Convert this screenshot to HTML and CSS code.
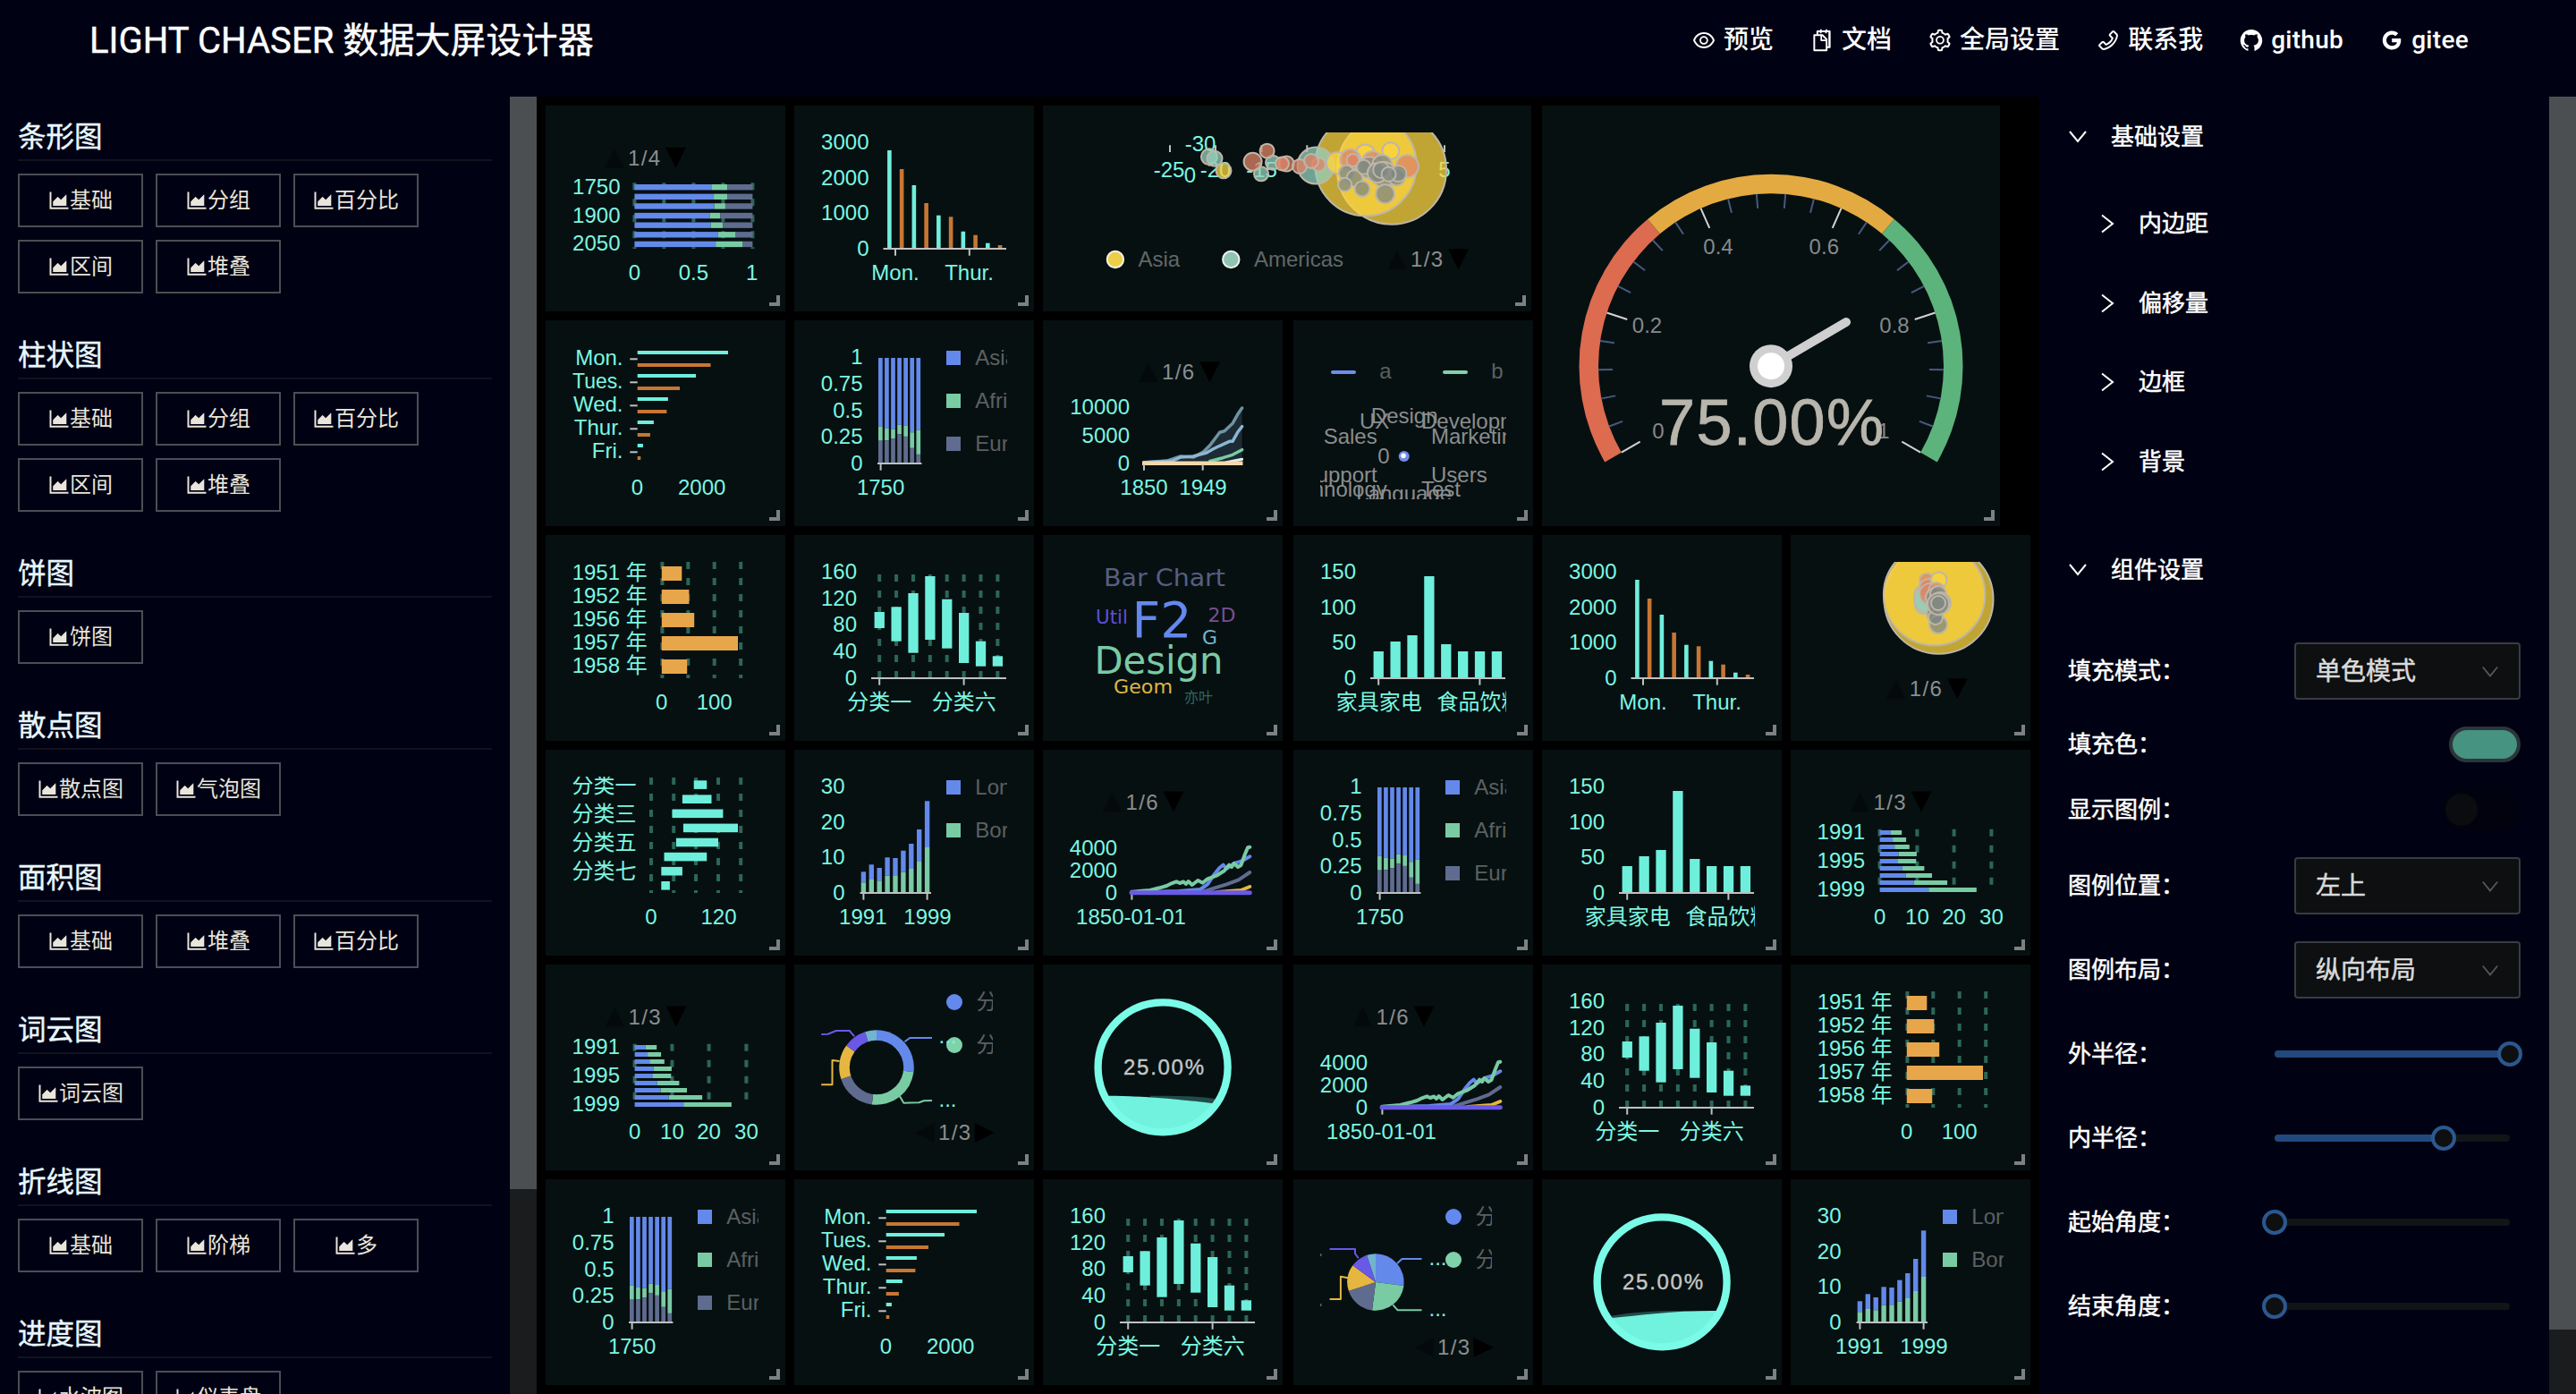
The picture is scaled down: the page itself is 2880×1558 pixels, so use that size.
FILE: index.html
```html
<!DOCTYPE html>
<html lang="zh-CN">
<head>
<meta charset="utf-8">
<title>LIGHT CHASER 数据大屏设计器</title>
<link rel="stylesheet" href="styles.css">
</head>
<body>
<svg class="defs" aria-hidden="true">
  <symbol id="i-area" viewBox="0 0 1024 1024"><path d="M888 792H200V168c0-4.400-3.600-8-8-8h-56c-4.400 0-8 3.600-8 8v688c0 4.400 3.600 8 8 8h752c4.400 0 8-3.600 8-8v-56c0-4.400-3.600-8-8-8zm-616-64h536c4.400 0 8-3.600 8-8V284c0-7.200-8.700-10.700-13.700-5.700L592 488.600l-125.400-124a8.030 8.030 0 00-11.300 0l-189 189.600a7.870 7.870 0 00-2.300 5.600V720c0 4.400 3.600 8 8 8z"/></symbol>
  <symbol id="i-eye" viewBox="0 0 1024 1024"><path d="M942.2 486.2C847.4 286.5 704.1 186 512 186c-192.2 0-335.4 100.5-430.2 300.3a60.3 60.3 0 000 51.5C176.6 737.5 319.9 838 512 838c192.2 0 335.4-100.5 430.2-300.3 7.7-16.2 7.7-35 0-51.500zM512 766c-161.300 0-279.400-81.800-362.700-254C232.600 339.800 350.700 258 512 258c161.300 0 279.400 81.800 362.700 254C791.500 684.200 673.400 766 512 766zm-4-430c-97.200 0-176 78.800-176 176s78.800 176 176 176 176-78.800 176-176-78.800-176-176-176zm0 288c-61.900 0-112-50.100-112-112s50.100-112 112-112 112 50.100 112 112-50.100 112-112 112z"/></symbol>
  <symbol id="i-doc" viewBox="0 0 1024 1024"><path d="M832 112H724V72c0-4.400-3.600-8-8-8h-48c-4.400 0-8 3.600-8 8v40H500V72c0-4.400-3.600-8-8-8h-48c-4.400 0-8 3.600-8 8v40H320c-17.700 0-32 14.300-32 32v120h-96c-17.700 0-32 14.300-32 32v632c0 17.700 14.300 32 32 32h512c17.700 0 32-14.300 32-32v-96h96c17.700 0 32-14.300 32-32V144c0-17.700-14.300-32-32-32zM664 888H232V336h218v174c0 22.100 17.900 40 40 40h174v338zm0-402H514V336h.2L664 485.800v.2zm128 274h-56V456L544 264H360v-80h68v32c0 4.400 3.600 8 8 8h48c4.400 0 8-3.600 8-8v-32h152v32c0 4.400 3.600 8 8 8h48c4.400 0 8-3.600 8-8v-32h68v576z"/></symbol>
  <symbol id="i-gear" viewBox="0 0 1024 1024"><path d="M924.8 625.7l-65.500-56c3.100-19 4.700-38.400 4.700-57.800s-1.600-38.800-4.700-57.800l65.500-56a32.030 32.030 0 009.300-35.200l-.9-2.600a443.740 443.740 0 00-79.700-137.900l-1.800-2.100a32.120 32.120 0 00-35.100-9.500l-81.300 28.900c-30-24.600-63.500-44-99.700-57.600l-15.700-85a32.050 32.050 0 00-25.800-25.700l-2.700-.5c-52.100-9.400-106.900-9.400-159 0l-2.700.5a32.050 32.050 0 00-25.800 25.700l-15.800 85.400a351.860 351.860 0 00-99 57.400l-81.900-29.100a32 32 0 00-35.100 9.500l-1.800 2.100a446.020 446.020 0 00-79.700 137.900l-.9 2.600c-4.500 12.500-.8 26.500 9.300 35.200l66.300 56.600c-3.100 18.800-4.600 38-4.600 57.100 0 19.200 1.500 38.400 4.600 57.100L99 625.500a32.030 32.030 0 00-9.300 35.200l.9 2.600c18.100 50.400 44.900 96.900 79.700 137.900l1.800 2.100a32.120 32.120 0 0035.100 9.500l81.900-29.100c29.800 24.500 63.100 43.900 99 57.400l15.800 85.400a32.050 32.050 0 0025.800 25.700l2.700.5a449.400 449.400 0 00159 0l2.700-.5a32.050 32.050 0 0025.800-25.700l15.700-85a350 350 0 0099.700-57.600l81.300 28.900a32 32 0 0035.100-9.500l1.800-2.100c34.800-41.100 61.600-87.500 79.700-137.900l.9-2.600c4.500-12.300.8-26.300-9.300-35zM788.300 465.900c2.500 15.100 3.800 30.600 3.800 46.100s-1.300 31-3.800 46.100l-6.600 40.100 74.700 63.900a370.030 370.030 0 01-42.600 73.600L721 702.800l-31.400 25.800c-23.900 19.600-50.500 35-79.300 45.800l-38.100 14.300-17.900 97a377.500 377.500 0 01-85 0l-17.900-97.200-37.800-14.500c-28.500-10.800-55-26.200-78.700-45.700l-31.400-25.900-93.400 33.200c-17-22.900-31.200-47.600-42.600-73.600l75.500-64.500-6.500-40c-2.400-14.900-3.700-30.300-3.700-45.500 0-15.300 1.200-30.600 3.700-45.500l6.500-40-75.500-64.500c11.300-26.100 25.600-50.700 42.600-73.600l93.400 33.200 31.400-25.900c23.700-19.500 50.200-34.900 78.700-45.700l37.900-14.300 17.900-97.200c28.100-3.200 56.800-3.200 85 0l17.900 97 38.100 14.300c28.700 10.800 55.400 26.200 79.300 45.800l31.400 25.800 92.800-32.900c17 22.900 31.200 47.600 42.600 73.600L781.800 426l6.500 39.900zM512 326c-97.200 0-176 78.800-176 176s78.800 176 176 176 176-78.800 176-176-78.800-176-176-176zm79.200 255.200A111.600 111.600 0 01512 614c-29.900 0-58-11.700-79.200-32.800A111.600 111.600 0 01400 502c0-29.900 11.700-58 32.800-79.200C454 401.600 482.100 390 512 390c29.900 0 58 11.600 79.200 32.800A111.600 111.600 0 01624 502c0 29.900-11.700 58-32.800 79.200z"/></symbol>
  <symbol id="i-phone" viewBox="0 0 1024 1024"><path d="M877.1 238.7L770.6 132.3c-13-13-30.400-20.300-48.800-20.300s-35.800 7.200-48.800 20.300L558.300 246.800c-13 13-20.300 30.500-20.300 48.900 0 18.500 7.200 35.800 20.300 48.900l89.600 89.700a405.460 405.460 0 01-86.400 127.300c-36.700 36.900-79.600 66-127.200 86.600l-89.600-89.700c-13-13-30.400-20.300-48.800-20.300a68.200 68.200 0 00-48.800 20.300L132.300 673c-13 13-20.300 30.500-20.300 48.900 0 18.500 7.200 35.800 20.300 48.900l106.400 106.400c22.200 22.200 52.800 34.900 84.200 34.900 6.500 0 12.800-.5 19.200-1.600 132.400-21.800 263.800-92.300 369.900-198.300C818 606 888.400 474.600 910.400 342.100c6.300-37.600-6.300-76.300-33.300-103.400zm-37.600 91.500c-19.500 117.900-82.900 235.500-178.400 331s-213 158.900-330.900 178.400c-14.800 2.500-30-2.500-40.800-13.200L184.900 721.900 295.700 611l119.800 120 .9.9 21.600-8a481.290 481.290 0 00285.700-285.800l8-21.600-120.800-120.700 110.800-110.900 104.500 104.500c10.800 10.800 15.800 26 13.300 40.800z"/></symbol>
  <symbol id="i-github" viewBox="0 0 1024 1024"><path d="M511.6 76.3C264.3 76.2 64 276.4 64 523.5 64 718.9 189.3 885 363.8 946c23.500 5.900 19.900-10.800 19.900-22.200v-77.500c-135.700 15.900-141.200-73.900-150.300-88.900C215 726 171.500 718 184.500 703c30.900-15.900 62.400 4 98.900 57.900 26.400 39.100 77.900 32.500 104 26 5.700-23.500 17.900-44.500 34.700-60.800-140.600-25.200-199.200-111-199.200-213 0-49.500 16.300-95 48.300-131.700-20.400-60.500 1.900-112.300 4.900-120 58.100-5.200 118.500 41.600 123.200 45.300 33-8.900 70.700-13.600 112.900-13.600 42.400 0 80.200 4.900 113.500 13.900 11.300-8.600 67.300-48.800 121.300-43.900 2.900 7.700 24.700 58.300 5.500 118 32.400 36.800 48.900 82.700 48.900 132.300 0 102.200-59 188.100-200 212.900a127.500 127.500 0 0138.100 91v112.500c.8 9 0 17.900 15 17.900 177.100-59.700 304.600-227 304.600-424.100 0-247.200-200.400-447.300-447.500-447.300z"/></symbol>
  <symbol id="i-google" viewBox="0 0 1024 1024"><path d="M881 442.4H519.7v148.5h206.4c-8.900 48-35.900 88.600-76.600 115.800-34.400 23-78.300 36.600-129.900 36.600-99.900 0-184.400-67.500-214.600-158.200-7.600-23-12-47.600-12-72.900s4.400-49.900 12-72.900c30.300-90.600 114.800-158.100 214.700-158.100 56.300 0 106.800 19.400 146.600 57.400l110-110.100c-66.500-62-153.200-100-256.600-100-149.900 0-279.600 86-342.700 211.400-26 51.800-40.800 110.400-40.800 172.400S151 632.800 177 684.600C240.100 810 369.800 896 519.700 896c103.600 0 190.400-34.400 253.800-93 72.500-66.800 114.400-165.200 114.400-282.100 0-27.200-2.400-53.300-6.900-78.500z"/></symbol>
  <symbol id="i-down" viewBox="0 0 22 16"><path d="M2 2l9 11 9-11" fill="none" stroke="currentColor" stroke-width="2"/></symbol>
  <symbol id="i-right" viewBox="0 0 16 22"><path d="M2 1.500l12 9.500-12 9.500" fill="none" stroke="currentColor" stroke-width="2"/></symbol>
</svg>

<header class="topbar">
  <h1 class="brand">LIGHT CHASER 数据大屏设计器</h1>
  <nav class="menu">
    <a class="menu-item"><svg class="menu-icon"><use href="#i-eye"/></svg>预览</a>
    <a class="menu-item"><svg class="menu-icon"><use href="#i-doc"/></svg>文档</a>
    <a class="menu-item"><svg class="menu-icon"><use href="#i-gear"/></svg>全局设置</a>
    <a class="menu-item"><svg class="menu-icon"><use href="#i-phone"/></svg>联系我</a>
    <a class="menu-item latin"><svg class="menu-icon"><use href="#i-github"/></svg>github</a>
    <a class="menu-item latin"><svg class="menu-icon"><use href="#i-google"/></svg>gitee</a>
  </nav>
</header>

<main class="workspace">
  <aside class="library">
    <div class="library-list" id="library"></div>
    <div class="scrollbar"><div class="thumb thumb-left"></div></div>
  </aside>

  <section class="canvas"><div class="board" id="board"></div></section>

  <aside class="settings">
    <div class="settings-body">
      <div class="group-title"><svg class="caret-down"><use href="#i-down"/></svg>基础设置</div>
      <div class="sub-list">
        <div class="sub-item"><svg class="caret-right"><use href="#i-right"/></svg>内边距</div>
        <div class="sub-item"><svg class="caret-right"><use href="#i-right"/></svg>偏移量</div>
        <div class="sub-item"><svg class="caret-right"><use href="#i-right"/></svg>边框</div>
        <div class="sub-item"><svg class="caret-right"><use href="#i-right"/></svg>背景</div>
      </div>
      <div class="group-title second"><svg class="caret-down"><use href="#i-down"/></svg>组件设置</div>
      <div class="form">
        <div class="field"><span>填充模式：</span><div class="select">单色模式<svg class="select-caret"><use href="#i-down"/></svg></div></div>
        <div class="field"><span>填充色：</span><div class="swatch"></div></div>
        <div class="field"><span>显示图例：</span><div class="switch"><i class="switch-dot"></i></div></div>
        <div class="field"><span>图例位置：</span><div class="select">左上<svg class="select-caret"><use href="#i-down"/></svg></div></div>
        <div class="field"><span>图例布局：</span><div class="select">纵向布局<svg class="select-caret"><use href="#i-down"/></svg></div></div>
        <div class="field tall"><span>外半径：</span><div class="slider"><div class="slider-fill" style="width:100%"><i class="handle"></i></div></div></div>
        <div class="field tall"><span>内半径：</span><div class="slider"><div class="slider-fill" style="width:71.8%"><i class="handle"></i></div></div></div>
        <div class="field tall"><span>起始角度：</span><div class="slider"><div class="slider-fill" style="width:0"><i class="handle"></i></div></div></div>
        <div class="field tall"><span>结束角度：</span><div class="slider"><div class="slider-fill" style="width:0"><i class="handle"></i></div></div></div>
      </div>
    </div>
    <div class="scrollbar"><div class="thumb thumb-right"></div></div>
  </aside>
</main>
<script src="charts.js"></script>
</body>
</html>
```

FILE: styles.css
```css
*, *::after { box-sizing: border-box; }

body {
  margin: 0;
  width: 2880px;
  height: 1558px;
  overflow: hidden;
  display: flex;
  flex-direction: column;
  background: #000113;
  color: #fff;
  font-family: Roboto, "Noto Sans CJK SC", sans-serif;
}

.defs { display: none; }

/* top bar */
.topbar {
  flex: none;
  height: 108px;
  padding: 0 120px 16px 100px;
  display: flex;
  align-items: center;
  justify-content: space-between;
}
.brand { margin: 0; font-size: 40px; font-weight: 400; line-height: 60px; white-space: nowrap; letter-spacing: .05px; -webkit-text-stroke: .4px currentColor; }
.menu { display: flex; gap: 40px; position: relative; top: -1px; }
.menu-item { display: flex; align-items: center; gap: 8px; font-size: 28px; line-height: 40px; white-space: nowrap; font-weight: 500; }
.menu-item.latin { letter-spacing: .3px; }
.menu-icon { width: 28px; height: 28px; fill: #fff; }

.workspace { flex: 1; min-height: 0; display: flex; }

/* component library */
.library { width: 600px; display: flex; overflow: hidden; }
.library-list { flex: 1; padding: 22px 20px 0; display: flex; flex-direction: column; gap: 46px; }
.category { flex: none; display: flex; flex-direction: column; gap: 14px; }
.category-title { height: 50px; border-bottom: 2px solid #11131f; font-size: 31.5px; line-height: 48px; color: #e8f8ff; -webkit-text-stroke: .4px currentColor; }
.category-items { display: flex; flex-wrap: wrap; gap: 14px; }
.component {
  width: 140px;
  height: 60px;
  border: 2px solid #4b4e55;
  padding-right: 2px;
  display: flex;
  align-items: center;
  justify-content: center;
  font-size: 24px;
  line-height: 1;
  color: #e9e5da;
  white-space: nowrap;
}
.component-icon { flex: none; width: 28px; height: 28px; margin-right: -2px; fill: #e9e5da; }

.scrollbar { width: 30px; flex: none; background: #1a1c1d; }
.thumb { background: #4b4f51; }
.thumb-left { height: 1221px; }
.thumb-right { height: 1378px; }

/* canvas */
.canvas { width: 1680px; background: #000; padding: 10px; overflow: hidden; }
.board {
  display: grid;
  grid-template-columns: 268px 268px 270px 268px 268px 268px;
  grid-auto-rows: 230px;
  gap: 10px;
}
.tile { position: relative; width: 268px; height: 230px; padding: 30px; background: #071011; }
.tile.wide { grid-column: span 2; width: 546px; }
.tile.big { grid-column: span 2; grid-row: span 2; width: 512px; height: 470px; }
.tile::after {
  content: "";
  position: absolute;
  right: 6px;
  bottom: 6px;
  width: 12px;
  height: 12px;
  border-right: 4px solid #7d8181;
  border-bottom: 4px solid #7d8181;
}
.chart { display: block; width: 100%; height: 170px; overflow: hidden; }
.big .chart { height: 410px; }
.chart text { font: 24px "Liberation Sans", "Noto Sans CJK SC", sans-serif; }
.chart .cloud { font-family: "DejaVu Sans", "Noto Sans CJK SC", sans-serif; }
.chart .value { font-size: 72px; }

/* settings */
.settings { width: 600px; display: flex; }
.settings-body { flex: 1; padding: 25px 32px 0 32px; font-size: 26px; line-height: 40px; -webkit-text-stroke: .5px currentColor; }
.group-title { display: flex; align-items: center; height: 40px; gap: 26px; }
.group-title.second { margin-top: 81px; }
.caret-down { width: 22px; height: 16px; }
.sub-list { margin-top: 57px; padding-left: 36px; display: flex; flex-direction: column; gap: 48.7px; }
.sub-item { display: flex; align-items: center; height: 40px; gap: 27px; }
.caret-right { width: 16px; height: 22px; }
.form { margin-top: 61px; display: flex; flex-direction: column; gap: 30px; }
.field { display: flex; align-items: center; justify-content: space-between; }
.field.tall { height: 64px; padding-right: 12px; }
.select {
  width: 253px;
  height: 64px;
  border: 2px solid #393c42;
  border-radius: 4px;
  background: #0d0f10;
  padding: 1px 22px 0;
  display: flex;
  align-items: center;
  justify-content: space-between;
  font-size: 28px;
  color: #dadada;
}
.select-caret { width: 20px; height: 16px; color: #55585b; }
.swatch { width: 80px; height: 40px; border: 4px solid #2d353b; border-radius: 20px; background: #459380; }
.switch { width: 88px; height: 46px; padding: 5px 4px; border-radius: 23px; background: #02020e; }
.switch-dot { display: block; width: 36px; height: 36px; border-radius: 50%; background: #0a0c0f; }
.slider { width: 263px; height: 8px; border-radius: 4px; background: #121516; }
.slider-fill { position: relative; height: 8px; border-radius: 4px; background: #21497d; }
.handle {
  position: absolute;
  right: -14px;
  top: -10px;
  width: 28px;
  height: 28px;
  border: 4px solid #2b588f;
  border-radius: 50%;
  background: #0d0f10;
}
```

FILE: charts.js
```js
const C = {
  text: '#7cf7e1', cyan: '#6eefdc', orange: '#c87634', amber: '#e8a64b', blue: '#6389ea', green: '#79cba4',
  slate: '#5f6c8f', yellow: '#e6b740', purple: '#6a58e6', sky: '#70b4cf', grid: '#2c6658', axis: '#bfc1c1',
  legend: '#5b6062', pager: '#8b8d8e', salmon: '#de8467', mint: '#93d0ba', grey: '#7f8982'
};

/* svg primitives */
const attrs = o => Object.entries(o).map(([k, v]) => ` ${k}="${v}"`).join('');
const rect = (x, y, w, h, fill) => `<rect${attrs({ x, y, width: w, height: h, fill })}/>`;
const circle = (cx, cy, r, fill, more = {}) => `<circle${attrs({ cx, cy, r, fill, ...more })}/>`;
const line = (x1, y1, x2, y2, stroke, width = 2, more = {}) =>
  `<line${attrs({ x1, y1, x2, y2, stroke, 'stroke-width': width, ...more })}/>`;
const poly = (points, stroke, width = 2, fill = 'none') =>
  `<polyline${attrs({ points, stroke, 'stroke-width': width, fill, 'stroke-linejoin': 'round', 'stroke-linecap': width > 2 ? 'round' : 'butt' })}/>`;
const text = (x, y, s, anchor = 'middle', fill = C.text, more = {}) =>
  `<text${attrs({ x, y: y + 8, fill, 'text-anchor': anchor, ...more })}>${s}</text>`;
const tri = (points, fill) => `<polygon${attrs({ points, fill })}/>`;
const each = (list, fn) => list.map(fn).join('');

/* shared chart parts */
const yLabels = (x, items) => each(items, ([y, s, w]) => text(x, y, s, 'end', C.text, w ? { textLength: w, lengthAdjust: 'spacingAndGlyphs' } : {}));
const xLabels = items => each(items, ([x, s]) => text(x, 187.3, s));
const dashes = (xs, y1, y2) => each(xs, x => line(x, y1, x, y2, C.grid, 4, { 'stroke-dasharray': '8 10' }));
const baseAxis = (x1, x2, ticks) => line(x1, 160, x2, 160, C.axis) + each(ticks, x => line(x, 160, x, 167.7, C.axis));
const pager = (x, y, s) =>
  tri(`${x - 26},${y + 11} ${x - 4.5},${y + 11} ${x - 15},${y - 11}`, '#040a0b') +
  text(x, y, s, 'start', C.pager, { textLength: 36 }) +
  tri(`${x + 42},${y - 12} ${x + 65},${y - 12} ${x + 53.5},${y + 11}`, '#000');
const sidePager = (x, y, s) =>
  tri(`${x - 26},${y} ${x - 4},${y - 11} ${x - 4},${y + 11}`, '#040a0b') +
  text(x, y, s, 'start', C.pager, { textLength: 36 }) +
  tri(`${x + 63},${y} ${x + 40.5},${y - 11} ${x + 40.5},${y + 11}`, '#000');
const squareLegend = items => each(items, ([s, c], i) =>
  rect(170, 34 + i * 48, 16, 16, c) + text(202.3, 42 + i * 48, s, 'start', C.legend));

const asia = [502, 635, 809, 947, 1402, 3634, 5268];
const africa = [106, 107, 111, 133, 221, 767, 1766];
const europe = [163, 203, 276, 408, 547, 729, 628];
const share = i => {
  const sum = asia[i] + africa[i] + europe[i];
  return [asia[i] / sum, africa[i] / sum, europe[i] / sum];
};

const charts = {
  percentBar: () => pager(92, 58.7, '1/4') + yLabels(83.5, [[91.3, '1750'], [122.7, '1900'], [154, '2050']]) +
    dashes([99.4, 132.3, 165.4, 198.4, 231.4], 86.3, 160) +
    each(asia, (_, i) => {
      const [a, f, e] = share(i), y = 88 + i * 10.62;
      return rect(99.4, y, 132 * a, 6.4, C.blue) + rect(99.4 + 132 * a, y, 132 * f, 6.4, C.green) + rect(99.4 + 132 * (a + f), y, 132 * e, 6.4, C.slate);
    }) + xLabels([[99.4, '0'], [165.4, '0.5'], [230.6, '1']]),

  groupColumn: () => yLabels(83.5, [[41.3, '3000'], [80.7, '2000'], [119.7, '1000'], [159.7, '0']]) +
    each([50, 71, 89, 109, 122.7, 124.3, 140.7, 144.7, 153.7, 156], (y, i) =>
      rect(104.1 + i * 13.74, y, 4.6, 160 - y, i % 2 ? C.orange : C.cyan)) +
    baseAxis(99.5, 237, [113, 195.8]) + xLabels([[113, 'Mon.'], [195.5, 'Thur.']]),

  groupBar: () => yLabels(86.5, [[41.9, 'Mon.'], [67.9, 'Tues.', 56.5], [93.9, 'Wed.'], [119.9, 'Thur.'], [145.9, 'Fri.']]) +
    each([[204, 184.5], [168, 150], [136.9, 135.4], [120.9, 116.9], [108.9, 106.3]], ([a, b], i) =>
      line(94.3, 43.3 + i * 26, 102.7, 43.3 + i * 26, C.axis) +
      rect(102.7, 34 + i * 26, a - 102.7, 4, C.cyan) + rect(102.7, 48 + i * 26, b - 102.7, 4, C.orange)) +
    xLabels([[102.5, '0'], [174.7, '2000']]),

  percentColumn: () => yLabels(76.5, [[41.3, '1'], [71, '0.75'], [100.7, '0.5'], [130, '0.25'], [159.7, '0']]) +
    each(asia, (_, i) => {
      const [a, f, e] = share(i), h = 117.5, x = 94 + i * 7.07;
      return rect(x, 42, 4.7, h * a, C.blue) + rect(x, 42 + h * a, 4.7, h * f, C.green) + rect(x, 42 + h * (a + f), 4.7, h * e, C.slate);
    }) + baseAxis(93, 142.4, [96.6]) + xLabels([[96.6, '1750']]) +
    squareLegend([['Asia', C.blue], ['Africa', C.green], ['Europe', C.slate]]),

  area: () => {
    const top = '112.9,158.7 139.4,157 154,152 168.5,153 179.4,147 186.7,139.7 193.9,130.3 197.6,125.3 203,123.7 212,115.3 217.6,105.3 222.6,98';
    return pager(133, 58.3, '1/6') + yLabels(97, [[97.3, '10000'], [128.7, '5000'], [159.7, '0']]) +
      poly(top + ' 222.6,160 112.9,160', 'none', 0, '#1d2b35') +
      poly(top, '#6f93a4', 3.5) +
      poly('112.9,159 145,157 154,153 168,152 183,148 190,144 197.6,140.3 208.5,135.3 212,135.3 217.6,125.3 222.6,118.7', '#8db6d2', 3.5) +
      poly('186.7,157.5 201.2,153.7 212,150.3 222.6,144.7', C.green, 3.5) + poly('205,158.7 222.6,155.3', '#e8eef0', 3) +
      line(111, 159.7, 223.5, 159.7, '#f3d8a8', 4.5) + line(113, 161, 113, 167.7, C.axis) + line(178.7, 161, 178.7, 167.7, C.axis) +
      xLabels([[113, '1850'], [179, '1949']]);
  },

  radar: () => line(44, 58, 68, 58, '#6f8eea', 4, { 'stroke-linecap': 'round' }) + text(103, 57.4, 'a', 'middle', C.legend) +
    line(169, 58, 193, 58, '#85cfab', 4, { 'stroke-linecap': 'round' }) + text(228, 57.4, 'b', 'middle', C.legend) +
    each([[86.8, 107, 'Design'], [73.9, 113, 'UX'], [143, 113, 'Development'], [154, 130, 'Marketing'], [154, 173.4, 'Users'], [143, 189.2, 'Test']],
      ([x, y, s]) => text(x, y, s, 'start', C.pager)) +
    each([[93.7, 130, 'Sales'], [93.7, 173.4, 'Support'], [104.8, 189.2, 'Technology']], ([x, y, s]) => text(x, y, s, 'end', C.pager)) +
    text(123.7, 194.4, 'Language', 'middle', C.pager) + text(101, 151.7, '0', 'middle', C.pager) +
    circle(123.7, 152, 6, '#6f8eea') + circle(123, 151.3, 2.8, '#fff'),

  rangeBar: () => yLabels(101.5, [[39.7, '分类一'], [71.7, '分类三'], [103.7, '分类五'], [135.7, '分类七']]) +
    dashes([118, 143.2, 168, 193, 218.2], 31, 160) +
    each([[165.7, 180.2], [152.9, 185.5], [141.6, 198.4], [153.9, 215], [145.9, 193], [132.5, 180.2], [129.3, 152.9], [129.3, 138.9]], ([a, b], i) =>
      rect(a, 34.3 + i * 16.1, b - a, 9.6, C.cyan)) + xLabels([[118, '0'], [193.5, '120']]),

  rowBar: () => yLabels(113.7, [[42.2, '1951 年'], [68.2, '1952 年'], [94.2, '1956 年'], [120.2, '1957 年'], [146.2, '1958 年']]) +
    dashes([130.4, 159.3, 188.7, 218.2], 30, 160) +
    each([152.3, 160.4, 166.2, 215, 158.2], (x, i) => rect(129.8, 35 + i * 26, x - 129.8, 16, C.amber)) +
    xLabels([[129.8, '0'], [188.7, '100']]),

  rangeColumn: () => yLabels(70, [[41.3, '160'], [70.7, '120'], [100.3, '80'], [129.7, '40'], [159.7, '0']]) +
    dashes([...Array(8).keys()].map(i => 95.2 + i * 18.88), 44, 160) +
    each([[86, 104], [80.3, 118.7], [65, 131.7], [46, 117], [71.7, 126.7], [87, 143], [118.7, 146.7], [135.3, 146.7]], ([a, b], i) =>
      rect(89.6 + i * 18.88, a, 11.3, b - a, C.cyan)) +
    baseAxis(86, 237, [95.2, 189.6]) + xLabels([[95.2, '分类一'], [189.8, '分类六']]),

  column: () => yLabels(70, [[41.3, '150'], [80.7, '100'], [119.7, '50'], [159.7, '0']]) +
    each([130, 119, 112, 46, 122, 130, 130, 130], (y, i) => rect(89.6 + i * 18.88, y, 11.3, 160 - y, C.cyan)) +
    baseAxis(86, 237, [95.2, 208.4]) + xLabels([[95.8, '家具家电'], [208.4, '食品饮料']]),

  stackColumn: () => yLabels(56.5, [[41.3, '30'], [80.7, '20'], [119.7, '10'], [159.7, '0']]) +
    each([[136.3, 148.3], [128.3, 145], [132, 146.3], [120.3, 140.7], [121, 140.3], [112.7, 136.7], [105, 133], [89, 125], [57.3, 109]], ([a, b], i) => {
      const x = 74.7 + i * 8.9;
      return rect(x, a, 5.4, b - a, C.blue) + rect(x, b, 5.4, 160 - b, C.green);
    }) + baseAxis(73.6, 153, [77.4, 148.6]) + xLabels([[76.8, '1991'], [149, '1999']]) +
    squareLegend([['London', C.blue], ['Bordeaux', C.green]]),

  stackBar: () => pager(92.5, 58.5, '1/3') + yLabels(83, [[91.5, '1991'], [123.7, '1995'], [155.7, '1999']]) +
    dashes([99.6, 141.4, 182.6, 224.4], 88.7, 152) +
    each([[12.3, 24.6], [14.5, 29.5], [16.6, 33.2], [20.9, 41.3], [20.4, 40.7], [25.2, 49.8], [28.9, 58.4], [38, 75.5], [54.6, 108.2]], ([a, b], i) =>
      rect(99.6, 90 + i * 8, a, 5, C.blue) + rect(99.6 + a, 90 + i * 8, b - a, 5, C.green)) +
    xLabels([[99.6, '0'], [141.4, '10'], [182.6, '20'], [224.4, '30']]),

  lines: () => pager(92.5, 58.5, '1/6') + yLabels(83.2, [[110, '4000'], [134.7, '2000'], [159.7, '0']]) +
    line(99.4, 160, 99.4, 167.7, C.axis) +
    poly('99.3,159.3 151.9,158 176,156 184,150.3 192,138.7 197.4,132 201.7,128.7 205.4,133 213.5,127 221.5,124.7 231.3,119.3', C.blue, 4) +
    poly('99.3,158.7 119.7,157 130.4,154.3 138.4,152 143.8,149.3 149.2,147.3 153,149 157.2,147.5 160,150 162.6,147 166.8,151 173.3,146 178.6,148.7 184,144.3 194.7,140.3 202.7,135.3 208.1,128.7 211,131 213.5,127 218,131 221.4,129 225.8,117 229,109.3 231.3,108.7', C.green, 4) +
    poly('178.6,158.7 194.7,153.7 205.4,150.3 218.8,145.3 231.3,137', C.slate, 4) +
    poly('195,159 221.5,157 231.3,153', C.yellow, 4) + line(99, 159.7, 231.3, 159.7, C.purple, 5, { 'stroke-linecap': 'round' }) +
    xLabels([[98.5, '1850-01-01']]),

  cloud: () => each([
    ['Bar Chart', 68, 56.7, 27, '#575f80', 136], ['Util', 59, 99, 21.5, '#5f4fd6', 36], ['F2', 99.5, 114.3, 56, '#6389ee', 67],
    ['2D', 184.5, 97.3, 22, '#77508f', 31], ['G', 178, 122.3, 21, '#70b4cf', 17], ['Design', 57.5, 155, 42.5, '#79cba4', 144],
    ['Geom', 79, 176.7, 21, '#ddb645', 66], ['亦叶', 158, 187.2, 16, '#30685f', 32]
  ], ([s, x, y, size, fill, w]) => `<text class="cloud" x="${x}" y="${y}" fill="${fill}" textLength="${w}" lengthAdjust="spacingAndGlyphs" style="font-size:${size}px">${s}</text>`),

  bubbleWide: () => each([142, 193, 244.5, 295.3, 449], x => line(x, 44.3, x, 52, C.axis)) +
    text(176, 43, '-30') + text(141, 72, '-25') + text(164.5, 77.7, '0') + text(193, 72, '-20') + text(244.5, 72, '-15') + text(449, 72, '5') +
    bubbles([[390, 71.7, 61, 'y'], [361, 66.6, 56.7, 'y'], [305, 67, 20.5, 'm'], [185.9, 57.3, 9, 'm'], [192, 59.3, 8.5, 'm'], [257, 63.7, 8, 'm'],
      [244, 76.3, 8, 'm'], [202, 72.7, 8.5, 'y'], [234.6, 62.7, 10, 's'], [250.6, 50.7, 8, 's'], [272.4, 65, 8.5, 's'], [267.4, 65, 7.5, 's'], [287, 68, 8, 's'],
      [308.4, 66, 7.5, 's'], [300, 62, 8, 's'], [360.4, 54.5, 11, 'y'], [329, 64, 12, 'y'], [343.7, 60.3, 11.5, 's'], [346.6, 61, 7, 's'], [368.4, 62, 11, 's'],
      [407.3, 67.7, 12.5, 's'], [388.8, 50.7, 9.5, 'y'], [339.3, 75.3, 8.5, 'g'], [348.4, 81.3, 9, 'g'], [364.8, 69.3, 12, 'g'], [358.6, 68.7, 8, 'g'],
      [337.5, 88.3, 7.5, 'g'], [357, 93, 8.5, 'g'], [379.3, 66, 11, 'g'], [381, 77, 14, 'g'], [373.9, 75.3, 11, 'g'], [395.5, 80, 9.5, 'g'], [397.5, 76, 9, 'g'],
      [378.2, 72, 9, 'g'], [386.6, 76.7, 8, 'g'], [382.6, 98.7, 10.5, 'g']]) +
    circle(80.9, 172, 9.2, '#edcf47', { stroke: '#f2f2ee', 'stroke-width': 2 }) + text(106.5, 172, 'Asia', 'start', '#626768') +
    circle(210.3, 172, 9.2, '#8fc4b3', { stroke: '#f2f2ee', 'stroke-width': 2 }) + text(236, 172, 'Americas', 'start', '#626768') +
    pager(411, 172.3, '1/3'),

  bubble: () => bubbles([[165.5, 71.7, 61, 'y'], [160.6, 66.6, 56.7, 'y'], [148.5, 66, 10, 'm'], [149, 78, 10, 'm'], [152, 72, 14, 'm'], [152, 50.7, 8, 's'], [154.5, 60, 11, 's'],
    [156, 66, 12, 's'], [165.5, 50.5, 9, 'y'], [163, 62, 9, 's'], [162, 70, 11, 'g'], [165, 66, 9, 'g'], [167, 76, 12, 'g'], [161, 88, 9, 'g'], [165, 100, 10, 'g'],
    [162, 92, 8, 'g'], [165, 77, 12, 'g'], [165, 76, 8, 'g']]) + pager(132.8, 172.3, '1/6'),

  donut: () => pieParts(92, 115, 41.8) + circle(92, 115, 30.2, '#071011') +
    poly('123.4,86.3 129.3,82 154,82', C.blue) + poly('118,147.3 122.4,154.7 139.5,154.3 144.9,152.3 154,152', C.green) +
    poly('50.6,108 42.5,107 42.5,134.3 30.2,134.3', C.yellow) + poly('67.2,80.3 61.8,74 46.8,74 37.7,77.7 30.2,78', C.purple) +
    pieLegend() + text(161.5, 80.4, '...', 'start') + text(161.5, 151.4, '...', 'start') + sidePager(161, 188, '1/3'),

  pie: () => pieParts(92, 115, 31.7) +
    poly('116.1,94 121.5,89 143.5,89', C.blue) + poly('111.3,140.3 116.7,146.3 143.5,146.3', C.green) +
    poly('61,110.3 52.9,108.7 52.9,134 40.6,134', C.yellow) + poly('72.7,88.3 69,83 69,78 40.6,78', C.purple) +
    rect(30, 83, 1.5, 3, C.legend) + rect(30, 139, 1.5, 3, C.legend) +
    pieLegend() + text(151.5, 88.4, '...', 'start') + text(151.5, 145.4, '...', 'start') + sidePager(161, 188, '1/3'),

  liquid: () => liquid('M72 146.7 C100 146.500 150 150 192 155.500 L192 186 L72 186Z', 'M120 146.7 C165 146.500 180 148 192 150 L192 156 C180 154 165 152 120 148.500Z'),
  liquidAlt: () => liquid('M76 155.3 C110 152 150 146.500 196 147 L196 186 L72 186Z', 'M76 153 C100 149 130 146 170 147.500 L120 151.500 L76 156Z'),

  gauge: () => {
    const cx = 256, cy = 291.2;
    const at = (deg, r) => [cx + r * Math.cos(deg * Math.PI / 180), cy + r * Math.sin(deg * Math.PI / 180)].map(v => v.toFixed(2)).join(' ');
    const arc = (a, b, fill) => `<path fill="${fill}" d="M${at(a, 214.5)} A214.5 214.5 0 0 1 ${at(b, 214.5)} L${at(b, 193)} A193 193 0 0 0 ${at(a, 193)}Z"/>`;
    const ticks = each([...Array(26).keys()], i => {
      const a = 150 + i * 9.6, major = i % 5 === 0;
      return `<path d="M${at(a, 193)} L${at(a, major ? 169 : 177)}" stroke="${major ? '#d2d4d4' : '#465a80'}" stroke-width="2"/>`;
    });
    return arc(150, 230, '#dc6b50') + arc(230, 310, '#e4aa42') + arc(310, 390, '#5cb37c') + ticks +
      each([[130, 363.7, '0'], [117.5, 246, '0.2'], [197, 157.7, '0.4'], [315.3, 157.7, '0.6'], [394, 246, '0.8'], [382, 363.7, '1']],
        ([x, y, s]) => text(x, y, s, 'middle', '#85898b')) +
      line(cx, cy, 340, 242, '#cfcfd0', 10, { 'stroke-linecap': 'round' }) + circle(cx, cy, 24, '#d0d0d1') + circle(cx, cy, 15, '#fff') +
      `<text class="value" x="256.5" y="378.7" text-anchor="middle" fill="#b8b5ac" stroke="#b8b5ac" stroke-width=".8" textLength="251">75.00%</text>`;
  }
};

function bubbles(list) {
  const fill = { y: '#fdd53f', m: C.mint, s: C.salmon, g: C.grey };
  return each(list, ([x, y, r, k]) => circle(x, y, r, fill[k], { 'fill-opacity': .76, stroke: '#beb6a8', 'stroke-width': 2 }));
}

function pieParts(cx, cy, r) {
  const colors = [C.blue, C.green, C.slate, C.yellow, C.purple, C.sky];
  let start = -Math.PI / 2;
  return each([27, 25, 18, 15, 10, 5], (v, i) => {
    const end = start + v / 50 * Math.PI;
    const d = `M${cx} ${cy} L${cx + r * Math.cos(start)} ${cy + r * Math.sin(start)} A${r} ${r} 0 0 1 ${cx + r * Math.cos(end)} ${cy + r * Math.sin(end)}Z`;
    start = end;
    return `<path d="${d}" fill="${colors[i]}"/>`;
  });
}

function pieLegend() {
  return circle(179, 42, 9, '#6389ee') + circle(179, 90, 9, '#7fd3aa') +
    `<svg x="200" y="30" width="22" height="80" viewBox="200 30 22 80">${text(203.5, 42, '分类', 'start', C.legend)}${text(203.5, 90, '分类', 'start', C.legend)}</svg>`;
}

let liquidId = 0;
function liquid(front, back) {
  const id = 'well' + liquidId++;
  return `<clipPath id="${id}"><circle cx="134.1" cy="114.8" r="70"/></clipPath><g clip-path="url(#${id})"><path d="${back}" fill="#234b47"/><path d="${front}" fill="#70f2de"/></g>` +
    circle(134.1, 114.8, 72.5, 'none', { stroke: '#7afbe8', 'stroke-width': 8.3 }) +
    text(135, 115.3, '25.00%', 'middle', '#c4c7c7', { textLength: 90, stroke: '#c4c7c7', 'stroke-width': .4 });
}

/* board */
const board = [
  'percentBar', 'groupColumn', 'bubbleWide', 'gauge',
  'groupBar', 'percentColumn', 'area', 'radar',
  'rowBar', 'rangeColumn', 'cloud', 'column', 'groupColumn', 'bubble',
  'rangeBar', 'stackColumn', 'lines', 'percentColumn', 'column', 'stackBar',
  'stackBar', 'donut', 'liquid', 'lines', 'rangeColumn', 'rowBar',
  'percentColumn', 'groupBar', 'rangeColumn', 'pie', 'liquidAlt', 'stackColumn'
];
const sizes = { bubbleWide: ['wide', 486, 170], gauge: ['big', 452, 410] };
document.getElementById('board').innerHTML = each(board, name => {
  const [cls, w, h] = sizes[name] || ['', 208, 170];
  return `<div class="tile ${cls}"><svg class="chart" viewBox="30 30 ${w} ${h}">${charts[name]()}</svg></div>`;
});

/* library */
const library = [
  ['条形图', ['基础', '分组', '百分比', '区间', '堆叠']],
  ['柱状图', ['基础', '分组', '百分比', '区间', '堆叠']],
  ['饼图', ['饼图']],
  ['散点图', ['散点图', '气泡图']],
  ['面积图', ['基础', '堆叠', '百分比']],
  ['词云图', ['词云图']],
  ['折线图', ['基础', '阶梯', '多']],
  ['进度图', ['水波图', '仪表盘']]
];
document.getElementById('library').innerHTML = each(library, ([title, items]) =>
  `<div class="category"><div class="category-title">${title}</div><div class="category-items">` +
  each(items, s => `<div class="component"><svg class="component-icon"><use href="#i-area"/></svg>${s}</div>`) + '</div></div>');
```
